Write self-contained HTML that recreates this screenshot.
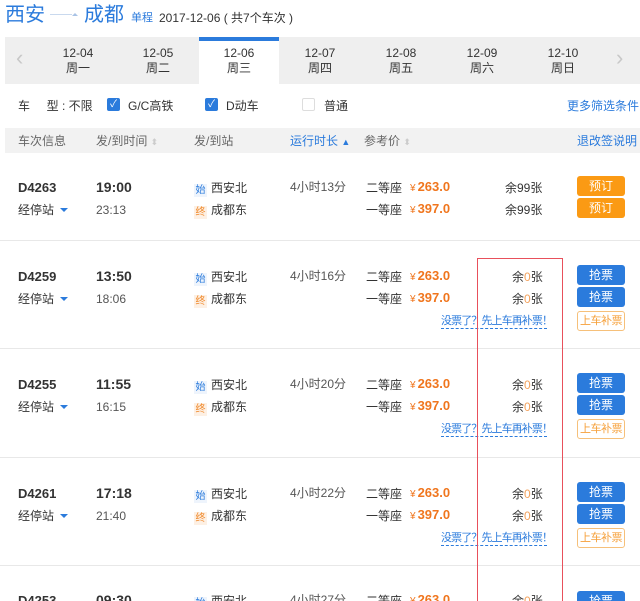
<!DOCTYPE html>
<html style="width:640px;height:601px;overflow:hidden"><head><meta charset="utf-8"><style>
*{margin:0;padding:0;box-sizing:border-box}
body{width:640px;height:601px;overflow:hidden;background:#fff;font-family:"Liberation Sans","Noto Sans CJK SC",sans-serif;font-size:12px;color:#333;position:relative}
.a{position:absolute;white-space:nowrap;line-height:16px}
.blue{color:#2b7bdc}
.row{position:absolute;left:0;width:640px;height:108px;border-top:1px solid #e8e8e8;overflow:hidden}
.code{left:18px;top:28px;font-weight:bold;font-size:13px;color:#333}
.stop{left:18px;top:50px;color:#333}
.stop:after{content:"";display:inline-block;margin-left:6px;border:4px solid transparent;border-top:4px solid #2b7bdc;vertical-align:-2px}
.t1{left:96px;top:27px;font-weight:bold;font-size:14px}
.t2{left:96px;top:50px;color:#555}
.tag{display:inline-block;width:13px;height:13px;font-size:10px;line-height:13px;text-align:center;margin-right:4px;background:#eef4fc;color:#2b7bdc;vertical-align:-1px}
.tag.o{background:#fdf0e4;color:#f08a2c}
.s1{left:194px;top:28px}.s2{left:194px;top:50px}
.dur{left:290px;top:27px;color:#555}
.c1{left:366px;top:28px}.c2{left:366px;top:50px}
.p1{left:410px;top:27px;color:#f0761e;font-weight:bold;font-size:13px}.p2{left:410px;top:49px;color:#f0761e;font-weight:bold;font-size:13px}
.p1 small,.p2 small{font-size:10px;font-weight:normal;margin-right:2px}
.r1{left:505px;top:28px}.r2{left:505px;top:50px}
.z{color:#f3a25d}
.b{left:577px;width:48px;height:20px;line-height:20px;text-align:center;color:#fff;border-radius:3px;background:#2b7bdc}
.b.or{background:#fb9a14}
.b1{top:24px}.b2{top:46px}
.b3{top:70px;background:#fff;color:#f6a03a;border:1px solid #f6c07a;font-size:11px;line-height:18px;letter-spacing:-0.5px}
.lk{left:441px;top:73px;width:106px;color:#2b7bdc;border-bottom:1px dashed #2b7bdc;line-height:14px;font-size:11px;letter-spacing:-0.9px;overflow:hidden}
</style></head><body>
<div class="a blue" style="left:5px;top:3px;font-size:20px;line-height:24px">西安</div>
<div class="a" style="left:50px;top:14px;width:22px;border-top:1px solid #c9d9ee"></div>
<div class="a" style="left:72px;top:10px;border:3px solid transparent;border-bottom:3px solid #a9c3e6;"></div>
<div class="a blue" style="left:84px;top:3px;font-size:20px;line-height:24px">成都</div>
<div class="a blue" style="left:131px;top:10px;font-size:11px">单程</div>
<div class="a" style="left:159px;top:10px">2017-12-06 ( 共7个车次 )</div>

<div class="a" style="left:5px;top:37px;width:635px;height:47px;background:#efefef"></div>
<div class="a" style="left:199px;top:37px;width:80px;height:47px;background:#fff;border-top:4px solid #2b7bdc"></div>
<div class="a" style="left:16px;top:50px;font-size:22px;color:#c8c8c8;font-weight:100">&#8249;</div>
<div class="a" style="left:616px;top:50px;font-size:22px;color:#c8c8c8">&#8250;</div>
<div class="a" style="left:38px;top:46px;width:80px;text-align:center;line-height:15px">12-04<br>周一</div>
<div class="a" style="left:118px;top:46px;width:80px;text-align:center;line-height:15px">12-05<br>周二</div>
<div class="a" style="left:199px;top:46px;width:80px;text-align:center;line-height:15px">12-06<br>周三</div>
<div class="a" style="left:280px;top:46px;width:80px;text-align:center;line-height:15px">12-07<br>周四</div>
<div class="a" style="left:361px;top:46px;width:80px;text-align:center;line-height:15px">12-08<br>周五</div>
<div class="a" style="left:442px;top:46px;width:80px;text-align:center;line-height:15px">12-09<br>周六</div>
<div class="a" style="left:523px;top:46px;width:80px;text-align:center;line-height:15px">12-10<br>周日</div>

<div class="a" style="left:18px;top:98px">车&nbsp;&nbsp;&nbsp;&nbsp;&nbsp;型 : 不限</div>
<div class="a" style="left:107px;top:98px;width:13px;height:13px;background:#2b7bdc;border-radius:2px;color:#fff;font-size:10px;line-height:13px;text-align:center">✓</div>
<div class="a" style="left:128px;top:98px">G/C高铁</div>
<div class="a" style="left:205px;top:98px;width:13px;height:13px;background:#2b7bdc;border-radius:2px;color:#fff;font-size:10px;line-height:13px;text-align:center">✓</div>
<div class="a" style="left:226px;top:98px">D动车</div>
<div class="a" style="left:302px;top:98px;width:13px;height:13px;border:1px solid #ddd;border-radius:2px"></div>
<div class="a" style="left:324px;top:98px">普通</div>
<div class="a blue" style="left:567px;top:98px">更多筛选条件</div>

<div class="a" style="left:5px;top:128px;width:635px;height:25px;background:#f2f2f2"></div>
<div class="a" style="left:18px;top:133px;color:#666">车次信息</div>
<div class="a" style="left:96px;top:133px;color:#666">发/到时间 <span style="color:#ccc;font-size:9px">⬍</span></div>
<div class="a" style="left:194px;top:133px;color:#666">发/到站</div>
<div class="a blue" style="left:290px;top:133px">运行时长 <span style="font-size:9px">▲</span></div>
<div class="a" style="left:364px;top:133px;color:#666">参考价 <span style="color:#ccc;font-size:9px">⬍</span></div>
<div class="a blue" style="left:577px;top:133px">退改签说明</div>

<div class="row" style="top:152px;border-top:none">
<div class="a code">D4263</div><div class="a stop">经停站</div>
<div class="a t1">19:00</div><div class="a t2">23:13</div>
<div class="a s1"><span class="tag">始</span>西安北</div><div class="a s2"><span class="tag o">终</span>成都东</div>
<div class="a dur">4小时13分</div>
<div class="a c1">二等座</div><div class="a c2">一等座</div>
<div class="a p1"><small>¥</small>263.0</div><div class="a p2"><small>¥</small>397.0</div>
<div class="a r1">余99张</div><div class="a r2">余99张</div>
<div class="a b or b1">预订</div><div class="a b or b2">预订</div>
</div>

<div class="row" style="top:240px">
<div class="a code">D4259</div><div class="a stop">经停站</div>
<div class="a t1">13:50</div><div class="a t2">18:06</div>
<div class="a s1"><span class="tag">始</span>西安北</div><div class="a s2"><span class="tag o">终</span>成都东</div>
<div class="a dur">4小时16分</div>
<div class="a c1">二等座</div><div class="a c2">一等座</div>
<div class="a p1"><small>¥</small>263.0</div><div class="a p2"><small>¥</small>397.0</div>
<div class="a r1" style="left:512px">余<span class="z">0</span>张</div><div class="a r2" style="left:512px">余<span class="z">0</span>张</div>
<div class="a b b1">抢票</div><div class="a b b2">抢票</div><div class="a b b3">上车补票</div>
<div class="a lk">没票了？先上车再补票！</div>
</div>

<div class="row" style="top:348px">
<div class="a code">D4255</div><div class="a stop">经停站</div>
<div class="a t1">11:55</div><div class="a t2">16:15</div>
<div class="a s1"><span class="tag">始</span>西安北</div><div class="a s2"><span class="tag o">终</span>成都东</div>
<div class="a dur">4小时20分</div>
<div class="a c1">二等座</div><div class="a c2">一等座</div>
<div class="a p1"><small>¥</small>263.0</div><div class="a p2"><small>¥</small>397.0</div>
<div class="a r1" style="left:512px">余<span class="z">0</span>张</div><div class="a r2" style="left:512px">余<span class="z">0</span>张</div>
<div class="a b b1">抢票</div><div class="a b b2">抢票</div><div class="a b b3">上车补票</div>
<div class="a lk">没票了？先上车再补票！</div>
</div>

<div class="row" style="top:457px">
<div class="a code">D4261</div><div class="a stop">经停站</div>
<div class="a t1">17:18</div><div class="a t2">21:40</div>
<div class="a s1"><span class="tag">始</span>西安北</div><div class="a s2"><span class="tag o">终</span>成都东</div>
<div class="a dur">4小时22分</div>
<div class="a c1">二等座</div><div class="a c2">一等座</div>
<div class="a p1"><small>¥</small>263.0</div><div class="a p2"><small>¥</small>397.0</div>
<div class="a r1" style="left:512px">余<span class="z">0</span>张</div><div class="a r2" style="left:512px">余<span class="z">0</span>张</div>
<div class="a b b1">抢票</div><div class="a b b2">抢票</div><div class="a b b3">上车补票</div>
<div class="a lk">没票了？先上车再补票！</div>
</div>

<div class="row" style="top:565px;height:36px">
<div class="a code" style="top:27px">D4253</div>
<div class="a t1" style="top:26px">09:30</div>
<div class="a s1" style="top:27px"><span class="tag">始</span>西安北</div>
<div class="a dur" style="top:26px">4小时27分</div>
<div class="a c1" style="top:27px">二等座</div>
<div class="a p1" style="top:26px"><small>¥</small>263.0</div>
<div class="a r1" style="left:512px;top:27px">余<span class="z">0</span>张</div>
<div class="a b b1" style="top:25px">抢票</div>
</div>

<div class="a" style="left:477px;top:258px;width:86px;height:343px;border:1px solid #e8505b;border-bottom:none"></div>
</body></html>
